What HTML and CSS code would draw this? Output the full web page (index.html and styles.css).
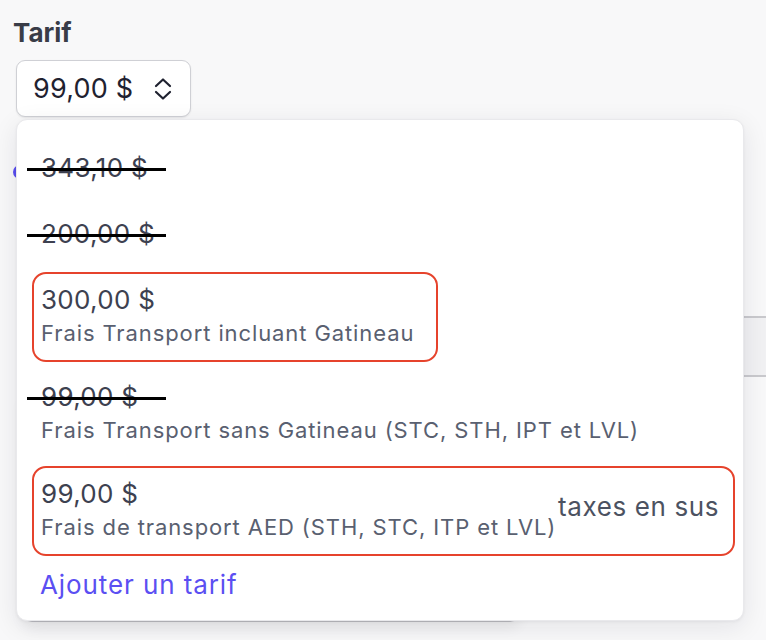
FILE: index.html
```html
<!DOCTYPE html>
<html lang="fr">
<head>
<meta charset="utf-8">
<title>Tarif</title>
<link rel="stylesheet" href="styles.css">
</head>
<body>
<main class="page">
  <div class="field-label">Tarif</div>
  <button class="select" type="button">
    <span class="select-value">99,00 $</span>
    <svg class="chevrons" width="20" height="24" viewBox="0 0 20 24" fill="none" stroke="#1f2230" stroke-width="2.2" stroke-linecap="round" stroke-linejoin="round">
      <path d="M3 9 L10 2.5 L17 9"/>
      <path d="M3 15 L10 21.5 L17 15"/>
    </svg>
  </button>

  <div class="behind">
    <span class="behind-radio"></span>
    <div class="behind-field"></div>
    <div class="behind-card"></div>
  </div>

  <div class="menu">
    <div class="option">
      <div class="price price--struck">343,10 $</div>
    </div>
    <div class="option">
      <div class="price price--struck">200,00 $</div>
    </div>
    <div class="option option--marked">
      <div class="price">300,00 $</div>
      <div class="desc">Frais Transport incluant Gatineau</div>
    </div>
    <div class="option">
      <div class="price price--struck">99,00 $</div>
      <div class="desc">Frais Transport sans Gatineau (STC, STH, IPT et LVL)</div>
    </div>
    <div class="option option--marked option--row">
      <div class="option-main">
        <div class="price">99,00 $</div>
        <div class="desc">Frais de transport AED (STH, STC, ITP et LVL)</div>
      </div>
      <div class="tax">taxes en sus</div>
    </div>
    <div class="add-link">Ajouter un tarif</div>
  </div>
</main>
</body>
</html>
```

FILE: styles.css
```css
* { box-sizing: border-box; }

html, body {
  margin: 0;
  padding: 0;
}

body {
  width: 766px;
  height: 640px;
  overflow: hidden;
  background: #f8f8f9;
  font-family: Inter, "Noto Sans", "Liberation Sans", sans-serif;
  color: #3d4150;
}

.page {
  position: relative;
  height: 640px;
  padding: 18px 0 0 0;
}

.field-label {
  margin-left: 13px;
  font-size: 26px;
  font-weight: 700;
  line-height: 30px;
  color: #393c47;
}

.select {
  display: flex;
  align-items: center;
  gap: 20px;
  margin: 12px 0 0 16px;
  width: 175px;
  height: 57px;
  padding: 0 0 0 16px;
  background: #ffffff;
  border: 1px solid #cfd0d5;
  border-radius: 9px;
  box-shadow: 0 1px 2px rgba(0,0,0,0.08);
  font-family: inherit;
  font-size: 27px;
  letter-spacing: 0.2px;
  color: #1f2230;
  cursor: pointer;
}

.select-value { line-height: 32px; }

.chevrons { display: block; flex: none; }

/* content lying underneath the open menu */
.behind {
  display: flex;
  flex-direction: column;
}

.behind-radio {
  width: 14px;
  height: 14px;
  margin: 48px 0 0 13px;
  border-radius: 50%;
  background: #5a4ff0;
}

.behind-field {
  margin: 137px 0 0 420px;
  height: 61px;
  border-top: 2px solid #c9c9cd;
  border-bottom: 2px solid #c9c9cd;
  background: #f1f1f3;
}

.behind-card {
  margin: 20px 0 0 22px;
  width: 498px;
  height: 225px;
  background: #ffffff;
  border-bottom: 3px solid #bdbdc2;
  border-radius: 0 0 10px 10px;
  box-shadow: 0 6px 14px rgba(0,0,0,0.06);
}

/* dropdown menu overlay */
.menu {
  position: absolute;
  left: 16px;
  top: 119px;
  width: 728px;
  height: 502px;
  background: #ffffff;
  border: 1px solid #e9e9ec;
  border-radius: 11px;
  box-shadow: 0 6px 26px rgba(20,20,40,0.09), 0 1px 3px rgba(20,20,40,0.05);
  padding: 20px 9px 0 15px;
  display: flex;
  flex-direction: column;
  align-items: flex-start;
  gap: 7px;
}

.option {
  position: relative;
  border: 2px solid transparent;
  border-radius: 14px;
  padding: 10px 22px 13px 7px;
}

.option--marked {
  border-color: #e6432c;
}

.option--row {
  display: flex;
  align-items: center;
  width: 703px;
  padding-right: 14px;
}

.option-main { flex: none; }

.price {
  position: relative;
  font-size: 26px;
  line-height: 32px;
  letter-spacing: 0.3px;
  color: #3d4150;
  white-space: nowrap;
}

.price--struck::after {
  content: "";
  position: absolute;
  left: -14px;
  width: 139px;
  top: 16px;
  height: 3px;
  background: #000000;
}

.desc {
  margin-top: 3px;
  font-size: 22px;
  line-height: 28px;
  letter-spacing: 0.9px;
  color: #596070;
  white-space: nowrap;
}

.tax {
  margin: -5px 0 0 auto;
  font-size: 26px;
  line-height: 30px;
  letter-spacing: 0.6px;
  color: #4c5261;
  white-space: nowrap;
}

.add-link {
  margin: 6px 0 0 8px;
  font-size: 26px;
  line-height: 32px;
  letter-spacing: 0.9px;
  color: #5b4ff2;
}
```
